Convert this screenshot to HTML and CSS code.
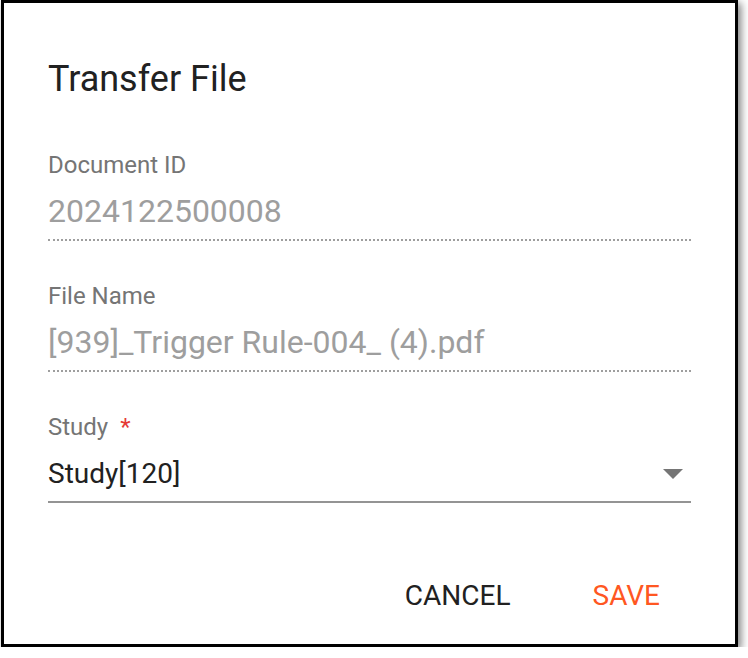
FILE: index.html
```html
<!DOCTYPE html>
<html lang="en">
<head>
<meta charset="utf-8">
<title>Transfer File</title>
<link rel="stylesheet" href="styles.css">
</head>
<body>
<div class="dialog">
  <h2 class="title">Transfer File</h2>
  <div class="field">
    <label class="label">Document ID</label>
    <div class="input disabled">2024122500008</div>
  </div>
  <div class="field">
    <label class="label">File Name</label>
    <div class="input disabled">[939]_Trigger Rule-004_ (4).pdf</div>
  </div>
  <div class="field">
    <label class="label">Study<span class="req">*</span></label>
    <div class="input select">
      <span class="select-value">Study[120]</span>
      <svg class="arrow" width="20" height="10" viewBox="0 0 20 10"><path d="M0 0 L20 0 L10 10 Z" fill="#757575"/></svg>
    </div>
  </div>
  <div class="actions">
    <button class="btn cancel">CANCEL</button>
    <button class="btn save">SAVE</button>
  </div>
</div>
</body>
</html>
```
FILE: styles.css
```css
html, body {
  margin: 0;
  padding: 0;
  background: #ffffff;
}
body {
  font-family: Roboto, "Liberation Sans", sans-serif;
  padding-left: 1px;
}
.dialog {
  box-sizing: border-box;
  width: 737px;
  height: 647px;
  border: 3px solid #000;
  background: #fff;
  box-shadow: 3px 3px 8px rgba(0, 0, 0, 0.5);
  padding: 54px 44px 0 44px;
  display: flex;
  flex-direction: column;
}
.title {
  margin: 0;
  font-size: 36px;
  line-height: 44px;
  font-weight: 400;
  color: #212121;
}
.field {
  display: flex;
  flex-direction: column;
  margin-top: 41px;
}
.field:first-of-type {
  margin-top: 50px;
}
.label {
  font-size: 24px;
  line-height: 28px;
  color: #757575;
}
.req {
  color: #e53935;
  margin-left: 12px;
}
.input {
  margin-top: 13px;
  font-size: 32px;
  line-height: 38px;
  padding-bottom: 9px;
  color: #212121;
  border-bottom: 2px solid #949494;
}
.input.disabled {
  color: #9e9e9e;
  border-bottom: 2px dotted #9e9e9e;
}
.select {
  display: flex;
  align-items: center;
  font-size: 28px;
  padding-top: 1px;
  padding-bottom: 8px;
}
.select-value {
  flex: 1;
}
.arrow {
  margin-right: 8px;
  margin-top: 0;
}
.actions {
  display: flex;
  justify-content: flex-end;
  gap: 50px;
  margin-top: 63px;
  padding-right: 15px;
}
.btn {
  background: none;
  border: none;
  font-family: Roboto, "Liberation Sans", sans-serif;
  font-size: 28px;
  line-height: 36px;
  font-weight: 400;
  padding: 12px 16px;
  cursor: pointer;
}
.cancel {
  color: #212121;
}
.save {
  color: #ff5722;
}
```
